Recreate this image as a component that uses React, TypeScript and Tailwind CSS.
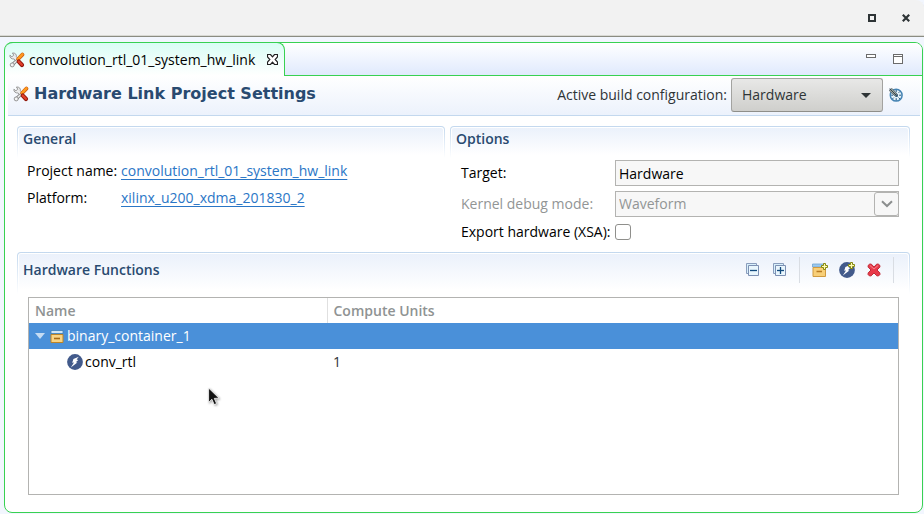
import { useState } from "react";
import type { ReactNode } from "react";

function ToolsIcon() {
  return (
    <svg viewBox="0 0 16 16" className="size-4 shrink-0" aria-hidden="true">
      <path d="M3.3 12.8 9 7.2" stroke="#7d7d7d" strokeWidth="3.2" strokeLinecap="round" />
      <path d="M3.3 12.8 9 7.2" stroke="#f0f0f0" strokeWidth="1.6" strokeLinecap="round" />
      <circle cx="3.2" cy="12.9" r="2" fill="#f4f4f4" stroke="#808080" strokeWidth=".8" />
      <path d="M.9 3.2 2.9 4.8 4.8 3.2 3.4 1C6 .6 7.8 2.4 7.4 4.8L9 6.6 6.8 8.6 5 7C2.4 7.2.5 5.6.9 3.2Z" fill="#ececec" stroke="#858585" strokeWidth=".8" />
      <path d="M13.4 2.6 9.2 7" stroke="#c85a10" strokeWidth="3.8" strokeLinecap="round" />
      <path d="M13.4 2.4 9.2 6.8" stroke="#ff9a1f" strokeWidth="2.6" strokeLinecap="round" />
      <path d="M9.8 9.6 13 13" stroke="#8f1509" strokeWidth="4.2" strokeLinecap="round" />
      <path d="M9.8 9.6 12.8 12.8" stroke="#e0402a" strokeWidth="2.4" strokeLinecap="round" />
    </svg>
  );
}

function TabCloseIcon() {
  return (
    <svg viewBox="0 0 11 11" className="size-[11px]" aria-hidden="true">
      <path d="M.5.5H3.5L5.5 2.8 7.5.5H10.5V3L8.2 5.5 10.5 8V10.5H7.5L5.5 8.2 3.5 10.5H.5V8L2.8 5.5.5 3Z" fill="#fff" stroke="#222" strokeWidth="1.2" />
    </svg>
  );
}

function GaugeIcon() {
  return (
    <svg viewBox="0 0 14 14" className="size-3.5" aria-hidden="true">
      <circle cx="7.2" cy="7.2" r="5.9" fill="#e6f3fa" stroke="#4584b4" strokeWidth="1.5" />
      <path d="M7.2 2V4.2M7.2 10.2V12.4M2.2 7.2H4.2M10.2 7.2H12.2M10.9 3.5 9.6 4.8M3.5 10.9 4.8 9.6M10.9 10.9 9.6 9.6" stroke="#24567d" />
      <path d="M.4 2.8 2.8.4 8.6 6.6 6.6 8.4Z" fill="#d3d6c4" stroke="#3c4c56" strokeWidth=".8" />
      <path d="M.6.6 8 8" stroke="#2f404c" strokeWidth="1.1" />
      <circle cx="7.8" cy="7.8" r="1.2" fill="#2d5674" />
    </svg>
  );
}

function TreeToggleIcon({ expand }: { expand?: boolean }) {
  return (
    <svg viewBox="0 0 14 14" className="size-3.5" aria-hidden="true">
      <path d="M.5.5H10.5V10.5H.5Z" fill="#d8f0fb" stroke="#8a9dbd" />
      <path d="M2.5 2.5H12.5V12.5H2.5Z" fill="#e9f6fd" stroke="#7d90b3" />
      <path d="M4 7.5H11" stroke="#124a7d" strokeWidth="1.3" />
      {expand && <path d="M7.5 4V11" stroke="#124a7d" strokeWidth="1.3" />}
    </svg>
  );
}

function Sparkle() {
  return <path d="M11.5.5H13.5V2.5H15.5V4.5H13.5V6.5H11.5V4.5H9.5V2.5H11.5Z" fill="#fffbb0" stroke="#85880f" />;
}

function ContainerIcon({ add }: { add?: boolean }) {
  if (add) {
    return (
      <svg viewBox="0 0 16 14" className="h-3.5 w-4" aria-hidden="true">
        <path d="M.5 1H13V4H.5Z" fill="#9cc9ee" stroke="#6ea3cf" strokeWidth=".8" />
        <path d="M1 4.5H13.5V13.5H1Z" fill="#f8cf78" stroke="#cf9a40" />
        <path d="M4.5 8.5H10" stroke="#b87a22" strokeWidth="1.5" />
        <Sparkle />
      </svg>
    );
  }
  return (
    <svg viewBox="0 0 14 13" className="h-[13px] w-3.5" aria-hidden="true">
      <path d="M1 .5H13V3.5H1Z" fill="#cfe6f8" stroke="#3f7db4" strokeWidth=".8" />
      <path d="M1 4.5H13V12.5H1Z" fill="#f9d484" stroke="#bd8427" />
      <path d="M4 8.5H10" stroke="#a76a16" strokeWidth="1.6" />
    </svg>
  );
}

function KernelIcon({ add }: { add?: boolean }) {
  return (
    <svg viewBox="0 0 16 16" className="size-4 shrink-0" aria-hidden="true">
      <circle cx="8" cy="8" r="7.9" fill="#425a8b" />
      <path d="M11.8 2.8 6.4 5 5.2 8.8 7 8.6 3.8 13.4 10.4 8.6 8.8 8.2 11.2 6 9.6 5.6Z" fill="#fff" />
      {add && <Sparkle />}
    </svg>
  );
}

function DeleteIcon() {
  return (
    <svg viewBox="0 0 14 14" className="size-3.5" aria-hidden="true">
      <path d="M1 2.6 2.8 1 4.4 1.2 7 4 9.6 1.2 11.2 1 13 2.6 12.8 4.2 10 7 12.8 9.8 13 11.4 11.4 13 9.8 12.8 7 10 4.2 12.8 2.6 13 1 11.4 1.2 9.8 4 7 1.2 4.2Z" fill="#e8394a" stroke="#c02b37" />
      <path d="M2.8 2.4 7 6 11.2 2.4" fill="none" stroke="#f5838b" />
    </svg>
  );
}

function SectionHead({ title, children }: { title: string; children?: ReactNode }) {
  return (
    <div className="rounded-t-[4px] bg-linear-to-b from-[#c3d8ee] to-white px-px pt-px">
      <div className="flex items-start justify-between rounded-t-[3px] border-x border-t border-white bg-linear-to-b from-[#ebf1fb] to-white to-90% pb-2 pl-1">
        <h2 className={children ? "text-sm/8 font-semibold text-[#294a70]" : "text-sm/[22px] font-semibold text-[#294a70]"}>{title}</h2>
        {children}
      </div>
    </div>
  );
}

function ToolButton({ label, children }: { label: string; children: ReactNode }) {
  return (
    <button type="button" aria-label={label} className="flex h-6 w-[27px] items-center justify-center">
      {children}
    </button>
  );
}

function Divider() {
  return <span className="mx-1.5 h-[26px] w-px bg-[#d9dde3]" />;
}

export default function App() {
  const [exportXsa, setExportXsa] = useState(false);

  return (
    <div className="flex min-h-screen flex-col bg-[#f2f6fe] font-['Open_Sans','Noto_Sans',sans-serif] text-sm text-black">
      <header className="flex h-[37px] items-center justify-end gap-[26px] rounded-tr-[8px] border-b border-[#8b8c82] bg-[#f2f2f2] pr-3.5 shadow-[inset_0_-1px_0_#d9d9d4]">
        <button type="button" aria-label="Maximize window" className="size-2 border-2 border-[#2e3436]" />
        <button type="button" aria-label="Close window">
          <svg viewBox="0 0 8 8" className="size-2" aria-hidden="true">
            <path d="M.8.8 7.2 7.2M7.2.8.8 7.2" stroke="#2e3436" strokeWidth="2.2" />
          </svg>
        </button>
      </header>

      <main className="mt-[5px] mr-px mb-px ml-1 flex grow flex-col rounded-[8px] border border-[#38d152] bg-white">
        <div className="flex h-[33px] rounded-t-[7px] bg-linear-to-b from-white to-[#dfe9fd]">
          <div className="-mt-px flex w-[280px] items-center rounded-t-[8px] border-t border-r border-[#38d152] bg-linear-to-b from-[#d9fdf5] to-white pl-1">
            <ToolsIcon />
            <span className="pl-1">convolution_rtl_01_system_hw_link</span>
            <button type="button" aria-label="Close tab" className="mr-1.5 ml-auto">
              <TabCloseIcon />
            </button>
          </div>
          <div className="flex grow items-start justify-end gap-[17px] border-b border-[#38d152] pt-[11px] pr-[19px]">
            <button type="button" aria-label="Minimize" className="h-1 w-2.5 border border-[#6b6b6b] bg-white" />
            <button type="button" aria-label="Maximize" className="h-2.5 w-2.5 border border-[#6b6b6b] bg-white shadow-[inset_0_1px_0_#fff,inset_0_2px_0_#6b6b6b]" />
          </div>
        </div>

        <div className="mr-0.5 ml-[3px] flex h-10 items-start border-b border-[#c3d8ee] bg-linear-to-b from-white to-[#ecf2fc] pt-0.5 pr-[17px] pl-[5px]">
          <div className="flex h-8 grow items-center gap-[5px]">
            <ToolsIcon />
            <h1 className="font-['DejaVu_Sans',sans-serif] text-base font-bold text-[#294a70]">Hardware Link Project Settings</h1>
          </div>
          <div className="flex items-center">
            <label htmlFor="config" className="text-[#2e3436]">
              Active build configuration:
            </label>
            <div className="relative ml-1">
              <select id="config" className="block h-[34px] w-[152px] appearance-none rounded-[3px] border border-[#a3a3a0] border-b-[#8e8e8a] bg-linear-to-b from-[#e8e8e7] to-[#cfcfcc] pl-2.5 text-[#2e3436]">
                <option>Hardware</option>
              </select>
              <svg viewBox="0 0 10 5" className="pointer-events-none absolute top-[15px] right-3 h-[5px] w-2.5" aria-hidden="true">
                <path d="M0 0H10L5 5Z" fill="#2e3436" />
              </svg>
            </div>
            <button type="button" aria-label="Profile" className="ml-1.5">
              <GaugeIcon />
            </button>
          </div>
        </div>

        <div className="flex grow flex-col pt-2.5 pr-3 pb-[17px] pl-3">
          <div className="grid grid-cols-[428fr_460fr] gap-[5px]">
            <section>
              <SectionHead title="General" />
              <dl className="grid grid-cols-[94px_1fr] gap-y-[7px] pt-[3px] pl-2.5">
                <dt>Project name:</dt>
                <dd>
                  <a href="#project" className="text-[#2a76c6] underline underline-offset-3">convolution_rtl_01_system_hw_link</a>
                </dd>
                <dt>Platform:</dt>
                <dd>
                  <a href="#platform" className="text-[#2a76c6] underline underline-offset-3">xilinx_u200_xdma_201830_2</a>
                </dd>
              </dl>
            </section>
            <section>
              <SectionHead title="Options" />
              <div className="grid grid-cols-[154px_1fr] items-center gap-y-[5px] pt-0.5 pr-[11px] pb-2.5 pl-[11px]">
                <label htmlFor="target">Target:</label>
                <input id="target" readOnly value="Hardware" className="h-[26px] w-full border border-[#b3b3b1] bg-[#f7f7f7] px-[3px]" />
                <label htmlFor="debug" className="text-[#929595]">Kernel debug mode:</label>
                <div className="relative">
                  <select id="debug" disabled className="block h-[26px] w-full appearance-none border border-[#b3b3b1] bg-[#f7f7f7] px-[3px] text-[#929595] opacity-100">
                    <option>Waveform</option>
                  </select>
                  <span className="pointer-events-none absolute top-px right-0 flex h-6 w-[25px] items-center justify-center rounded-[3px] border border-[#b3b3b1] bg-[#f7f7f7]">
                    <svg viewBox="0 0 12 8" className="h-2 w-3" aria-hidden="true">
                      <path d="M1 1.2 6 6 11 1.2" fill="none" stroke="#8b8e8e" strokeWidth="2" />
                    </svg>
                  </span>
                </div>
                <label htmlFor="xsa">Export hardware (XSA):</label>
                <input
                  id="xsa"
                  type="checkbox"
                  checked={exportXsa}
                  onChange={(e) => setExportXsa(e.target.checked)}
                  className="size-4 appearance-none rounded-[3px] border border-[#8f8f8c] bg-white checked:bg-[#4a90d9]"
                />
              </div>
            </section>
          </div>

          <section className="flex grow flex-col">
            <SectionHead title="Hardware Functions">
              <div className="flex h-8 items-center pr-2">
                <ToolButton label="Collapse all"><TreeToggleIcon /></ToolButton>
                <ToolButton label="Expand all"><TreeToggleIcon expand /></ToolButton>
                <Divider />
                <ToolButton label="Add binary container"><ContainerIcon add /></ToolButton>
                <ToolButton label="Add hardware function"><KernelIcon add /></ToolButton>
                <ToolButton label="Remove"><DeleteIcon /></ToolButton>
                <Divider />
              </div>
            </SectionHead>
            <div className="relative mx-[11px] mt-[3px] grow border border-[#b3b3b1] bg-white">
              <table className="w-full table-fixed border-collapse text-left">
                <colgroup>
                  <col className="w-[298px]" />
                  <col />
                </colgroup>
                <thead>
                  <tr className="h-[25px] text-[#8f9393]">
                    <th className="border-r border-[#e0e0e0] p-0 pl-1.5 font-semibold">Name</th>
                    <th className="p-0 pl-1.5 font-semibold">Compute Units</th>
                  </tr>
                </thead>
                <tbody>
                  <tr className="h-[26px] bg-[#4a90d9] text-white">
                    <td className="p-0 pl-1.5">
                      <div className="flex items-center">
                        <svg viewBox="0 0 10 6" className="mr-[5px] h-1.5 w-2.5" aria-hidden="true">
                          <path d="M0 0H10L5 6Z" fill="#c5dcf3" />
                        </svg>
                        <ContainerIcon />
                        <span className="pl-[3px]">binary_container_1</span>
                      </div>
                    </td>
                    <td />
                  </tr>
                  <tr className="h-[26px]">
                    <td className="p-0 pl-[38px]">
                      <div className="flex items-center">
                        <KernelIcon />
                        <span className="pl-0.5">conv_rtl</span>
                      </div>
                    </td>
                    <td className="p-0 pl-1.5 text-[#2e3436]">1</td>
                  </tr>
                </tbody>
              </table>
              <svg viewBox="0 0 12 19" className="absolute top-[89px] left-[179px] h-[19px] w-3 drop-shadow-[1px_1px_1px_#00000060]" aria-hidden="true">
                <path d="M.6 1V15.4L3.9 12.3 6.2 17.6 8.6 16.6 6.3 11.4 11 11.2Z" fill="#111" stroke="#fff" strokeWidth=".8" />
              </svg>
            </div>
          </section>
        </div>
      </main>
    </div>
  );
}
